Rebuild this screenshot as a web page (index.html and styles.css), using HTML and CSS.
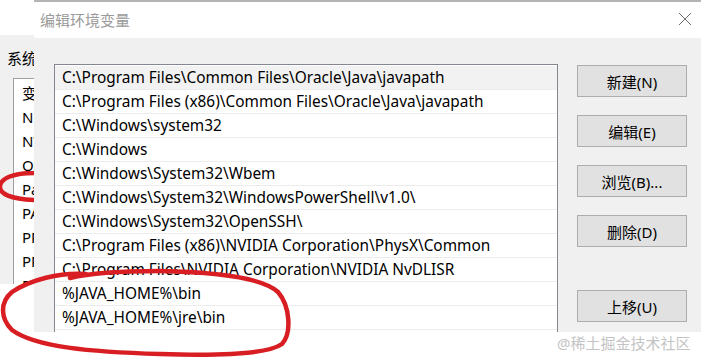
FILE: index.html
```html
<!DOCTYPE html>
<html lang="zh-CN">
<head>
<meta charset="UTF-8">
<title>编辑环境变量</title>
<link rel="stylesheet" href="styles.css">
</head>
<body>
<div class="desk">
  <div class="parent-win">
    <div class="parent-head"></div>
    <div class="parent-body">
      <div class="group-label">系统</div>
      <div class="var-list">
        <div class="var-row">变量</div>
        <div class="var-row">NUMBER_OF_PROCESSORS</div>
        <div class="var-row">NVM_HOME</div>
        <div class="var-row">OS</div>
        <div class="var-row">Path</div>
        <div class="var-row">PATHEXT</div>
        <div class="var-row">PROCESSOR_ARCHITECTURE</div>
        <div class="var-row">PROCESSOR_IDENTIFIER</div>
        <div class="var-row">PROCESSOR_LEVEL</div>
      </div>
    </div>
    <svg class="mark-small" width="40" height="40" viewBox="0 0 40 40">
      <path d="M36 2 C16 2, 3 7, 2 15 C1 23, 13 28, 36 29" fill="none" stroke="#d81e22" stroke-width="4.5" stroke-linecap="round"/>
    </svg>
  </div>

  <div class="dialog">
    <div class="titlebar">
      <span class="title">编辑环境变量</span>
      <svg class="close" width="14" height="14" viewBox="0 0 14 14">
        <path d="M1 1 L13 13 M13 1 L1 13" stroke="#6b6b6b" stroke-width="1"/>
      </svg>
    </div>
    <div class="dialog-body">
      <div class="path-list">
        <div class="path-row selected">C:\Program Files\Common Files\Oracle\Java\javapath</div>
        <div class="path-row">C:\Program Files (x86)\Common Files\Oracle\Java\javapath</div>
        <div class="path-row">C:\Windows\system32</div>
        <div class="path-row">C:\Windows</div>
        <div class="path-row">C:\Windows\System32\Wbem</div>
        <div class="path-row">C:\Windows\System32\WindowsPowerShell\v1.0\</div>
        <div class="path-row">C:\Windows\System32\OpenSSH\</div>
        <div class="path-row">C:\Program Files (x86)\NVIDIA Corporation\PhysX\Common</div>
        <div class="path-row">C:\Program Files\NVIDIA Corporation\NVIDIA NvDLISR</div>
        <div class="path-row">%JAVA_HOME%\bin</div>
        <div class="path-row">%JAVA_HOME%\jre\bin</div>
      </div>
      <div class="actions">
        <button class="btn">新建(N)</button>
        <button class="btn">编辑(E)</button>
        <button class="btn">浏览(B)...</button>
        <button class="btn">删除(D)</button>
        <button class="btn btn-gap">上移(U)</button>
      </div>
    </div>
  </div>

  <div class="watermark">@稀土掘金技术社区</div>

  <svg class="mark-big" width="701" height="359" viewBox="0 0 701 359">
    <path d="M86 274 C60 272, 30 280, 12 292 C0 302, 0 318, 12 330 C35 347, 90 352, 160 354 C220 356, 268 354, 282 344 C292 333, 290 306, 278 292 C262 277, 210 272, 160 271 C120 271, 90 273, 70 278" fill="none" stroke="#d81e22" stroke-width="4.5" stroke-linecap="round"/>
  </svg>
</div>
</body>
</html>
```

FILE: styles.css
```css
body {
  margin: 0;
  background: #fff;
  font-family: "Noto Sans", "Noto Sans CJK SC", sans-serif;
  color: #000;
}
.desk {
  position: relative;
  width: 701px;
  height: 359px;
  overflow: hidden;
  background: #fff;
}

/* 后面的系统属性窗口，只露出左边一条 */
.parent-win {
  position: absolute;
  left: 0;
  top: 0;
  width: 34px;
  height: 284px;
  background: #f0f0f0;
  overflow: hidden;
}
.parent-head {
  height: 35px;
  background: #fff;
}
.parent-body {
  padding: 13px 0 0 7px;
}
.group-label {
  font-size: 15px;
  line-height: 20px;
  height: 30px;
  white-space: nowrap;
}
.var-list {
  margin-left: 6px;
  background: #fff;
  border-left: 1px solid #a0a0a0;
  border-top: 1px solid #a0a0a0;
  padding-top: 2px;
  height: 220px;
  overflow: hidden;
}
.var-row {
  height: 24px;
  line-height: 24px;
  padding-left: 8px;
  font-size: 15px;
  white-space: nowrap;
}
.mark-small {
  position: absolute;
  left: -2px;
  top: 171px;
}

/* 编辑环境变量 对话框 */
.dialog {
  position: absolute;
  left: 34px;
  top: 0;
  width: 667px;
  height: 332px;
  background: #f0f0f0;
  border-top: 2px solid #b4b4b4;
  box-sizing: border-box;
  overflow: hidden;
}
.titlebar {
  height: 36px;
  background: #fff;
  display: flex;
  align-items: center;
  justify-content: space-between;
  padding: 0 9px 0 6px;
}
.title {
  font-size: 15px;
  color: #9a9a9a;
  margin-top: -2px;
}
.close {
  margin-top: -3px;
}
.dialog-body {
  display: flex;
  padding: 26px 14px 0 20px;
  gap: 19px;
}
.path-list {
  width: 502px;
  height: 300px;
  background: #fff;
  border: 1px solid #828790;
  padding-top: 1px;
}
.path-row {
  height: 23px;
  line-height: 23px;
  border-bottom: 1px solid #ececec;
  padding-left: 7px;
  font-size: 15.4px;
  white-space: nowrap;
  overflow: hidden;
}
.path-row.selected {
  background: #f2f2f2;
}
.actions {
  display: flex;
  flex-direction: column;
  gap: 18px;
  padding-top: 1px;
}
.btn {
  width: 110px;
  height: 32px;
  background: #e1e1e1;
  border: 1px solid #adadad;
  font-family: "Noto Sans", "Noto Sans CJK SC", sans-serif;
  font-size: 15px;
  color: #000;
  padding: 0;
}
.btn-gap {
  margin-top: 25px;
}

.watermark {
  position: absolute;
  left: 557px;
  top: 332px;
  font-size: 15px;
  color: #c4c4c4;
}
.mark-big {
  position: absolute;
  left: 0;
  top: 0;
}
```
